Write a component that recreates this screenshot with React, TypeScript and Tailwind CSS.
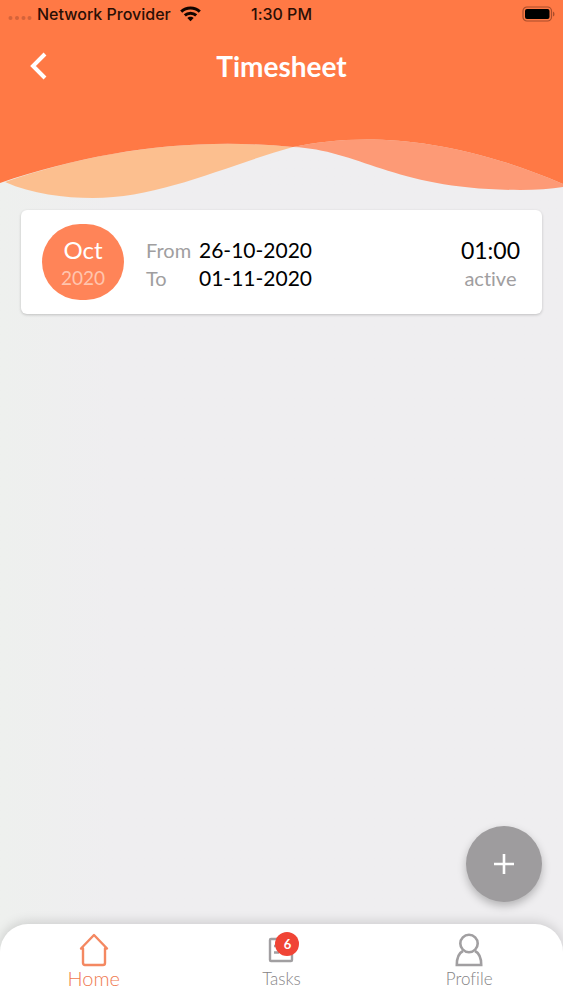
import React from "react";

function StatusBar() {
  return (
    <div className="grid h-7 grid-cols-[1fr_auto_1fr] items-center pr-2 pl-2 font-['Inter',sans-serif] text-base font-medium text-[#2a0f05]">
      <div className="flex items-center gap-[5px]">
        <svg width="24" height="16" viewBox="0 0 24 16" fill="#d4633a" aria-hidden="true">
          <circle cx="2.5" cy="12" r="2" />
          <circle cx="9" cy="12" r="2" />
          <circle cx="15.5" cy="12" r="2" />
          <circle cx="21.5" cy="12" r="2" />
        </svg>
        <span className="whitespace-nowrap">Network Provider</span>
        <svg className="ml-1" width="21" height="16" viewBox="0 0 21 16" fill="none" stroke="#120500" strokeWidth="3" aria-hidden="true">
          <path d="M1.2 5.6C6.5 .7 14.5 .7 19.8 5.6" />
          <path d="M4.8 9.3C8 6.4 13 6.4 16.2 9.3" />
          <path d="M7.3 12C9 10.3 12 10.3 13.7 12L10.5 15.2Z" fill="#120500" stroke="none" />
        </svg>
      </div>
      <span>1:30 PM</span>
      <svg className="justify-self-end" width="33" height="16" viewBox="0 0 33 16" aria-hidden="true">
        <rect x="1" y="1" width="28.5" height="14" rx="4" fill="none" stroke="#a94d2b" strokeWidth="1.2" />
        <rect x="3" y="3" width="24.5" height="10" rx="2" fill="#000" />
        <path d="M31 5.5Q32.5 6 32.5 8T31 10.5Z" fill="#a94d2b" />
      </svg>
    </div>
  );
}

function Header() {
  return (
    <header>
      <div className="h-[130px] bg-[#ff7945]">
        <StatusBar />
        <div className="grid h-[76px] grid-cols-[1fr_auto_1fr] items-center px-7">
          <button type="button" aria-label="Back" className="flex size-6 items-center">
            <svg width="20" height="28" viewBox="0 0 20 28" fill="none" stroke="#fff" strokeWidth="4" aria-hidden="true">
              <path d="M17 2L5 14L17 26" />
            </svg>
          </button>
          <h1 className="font-['Lato',sans-serif] text-[28px] leading-8 font-bold text-white">Timesheet</h1>
        </div>
      </div>
      <svg className="block h-[70px] w-full" viewBox="0 130 563 70" preserveAspectRatio="none" aria-hidden="true">
        <path d="M0 183L5 182C32 194 64 198 93 198C160 198 225 166 293 147C190 137 95 151 5 182Z" fill="#fcbf8f" />
        <path d="M293 147C360 150 395 190 520 190Q545 190 563 187V184C440 131 350 135 293 147Z" fill="#fd9a76" />
        <path d="M0 130V183C95 151 190 137 293 147C350 135 440 131 563 184V130Z" fill="#ff7945" />
      </svg>
    </header>
  );
}

function TimesheetCard() {
  return (
    <article className="flex items-center rounded-md bg-white py-[14px] pr-[22px] pl-[21px] font-['Lato',sans-serif] shadow-[0_1px_3px_rgba(0,0,0,0.2)]">
      <div className="flex h-19 w-[82px] flex-col items-center justify-center rounded-[38px] bg-[#ff8458] pt-1">
        <span className="text-2xl leading-7 text-white">Oct</span>
        <span className="text-[19px] leading-7 text-[#ffc5ae]">2020</span>
      </div>
      <dl className="ml-[22px] grid grid-cols-[53px_auto] items-baseline pt-1 text-[21px] leading-7 text-black">
        <dt className="text-xl leading-7 text-[#a09ea0]">From</dt>
        <dd>26-10-2020</dd>
        <dt className="text-xl leading-7 text-[#a09ea0]">To</dt>
        <dd>01-11-2020</dd>
      </dl>
      <div className="ml-auto flex flex-col items-center pt-1">
        <span className="text-[23px] leading-7 text-black">01:00</span>
        <span className="text-xl leading-7 text-[#a09ea0]">active</span>
      </div>
    </article>
  );
}

function HomeIcon() {
  return (
    <svg width="30" height="34" viewBox="0 0 30 34" fill="none" stroke="#f48861" strokeWidth="2.4" strokeLinejoin="round" strokeLinecap="round" aria-hidden="true">
      <path d="M15 2L28 15.5H26V30Q26 32 24 32H6Q4 32 4 30V15.5H2Z" />
    </svg>
  );
}

function TasksIcon() {
  return (
    <svg width="26" height="34" viewBox="0 0 26 34" fill="none" stroke="#a19fa1" strokeWidth="2.4" aria-hidden="true">
      <rect x="2" y="6" width="22" height="22" rx="1" />
      <path d="M6 19.5H11M6 13H10M13 13H20" />
    </svg>
  );
}

function ProfileIcon() {
  return (
    <svg width="28" height="34" viewBox="0 0 28 34" fill="none" stroke="#a19fa1" strokeWidth="2.6" aria-hidden="true">
      <circle cx="14" cy="10.5" r="8.7" />
      <path d="M8 18C4 20 1.8 25 1.8 32H26.2C26.2 25 24 20 20 18" />
    </svg>
  );
}

function TabBar() {
  return (
    <nav className="grid h-19 grid-cols-3 rounded-t-[28px] bg-white pt-[9px] font-['Lato',sans-serif] text-[17px] leading-6 font-light text-[#858385] shadow-[0_-2px_12px_rgba(0,0,0,0.15)]">
      <a href="#home" aria-current="page" className="flex flex-col items-center text-xl leading-[22px] text-[#f07a50]">
        <HomeIcon />
        <span>Home</span>
      </a>
      <a href="#tasks" className="flex flex-col items-center">
        <span className="relative">
          <TasksIcon />
          <span className="absolute -top-px left-[7px] flex size-6 items-center justify-center rounded-full bg-[#f04435] text-[13px] font-bold text-white">6</span>
        </span>
        <span>Tasks</span>
      </a>
      <a href="#profile" className="flex flex-col items-center">
        <ProfileIcon />
        <span className="[font-variant-ligatures:none]">Profile</span>
      </a>
    </nav>
  );
}

export default function App() {
  return (
    <div className="flex min-h-screen flex-col bg-linear-to-r from-[#eef0ee] to-[#efeef0] to-20% [font-variant-ligatures:none]">
      <Header />
      <main className="flex flex-1 flex-col px-[21px] pt-[10px] pb-[22px]">
        <TimesheetCard />
        <button
          type="button"
          aria-label="Add timesheet"
          className="mt-auto flex size-19 items-center justify-center self-end rounded-full bg-[#9e9c9e] shadow-[0_4px_8px_rgba(0,0,0,0.25)]"
        >
          <svg width="20" height="20" viewBox="0 0 20 20" stroke="#fff" strokeWidth="2.6" aria-hidden="true">
            <path d="M10 0V20M0 10H20" />
          </svg>
        </button>
      </main>
      <TabBar />
    </div>
  );
}
